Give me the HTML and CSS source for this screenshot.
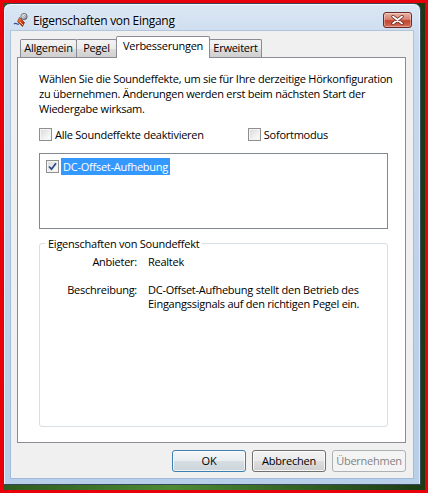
FILE: index.html
```html
<!DOCTYPE html>
<html lang="de">
<head>
<meta charset="utf-8">
<title>Eigenschaften von Eingang</title>
<link rel="stylesheet" href="styles.css">
</head>
<body>
<div class="screen">
  <div class="window">
    <div class="titlebar">
      <svg class="appicon" width="16" height="16" viewBox="0 0 16 16">
        <defs>
          <linearGradient id="mbody" x1="0" y1="0" x2="1" y2="1">
            <stop offset="0" stop-color="#ffb347"/>
            <stop offset="0.5" stop-color="#e0401c"/>
            <stop offset="1" stop-color="#8a1408"/>
          </linearGradient>
          <radialGradient id="mhead" cx="0.4" cy="0.35" r="0.7">
            <stop offset="0" stop-color="#ffffff"/>
            <stop offset="0.6" stop-color="#b9bec6"/>
            <stop offset="1" stop-color="#5a606a"/>
          </radialGradient>
        </defs>
        <path d="M1 12 C3 10 4 13 6 12" fill="none" stroke="#2a4f9a" stroke-width="1.2"/>
        <path d="M6.5 5.5 L11.5 10.5 L9.5 14.5 L4.5 9.5 Z" fill="url(#mbody)" stroke="#7a1a0a" stroke-width="0.6"/>
        <path d="M7 10 L10 13" stroke="#ffd36b" stroke-width="1"/>
        <circle cx="11" cy="4.5" r="3.2" fill="url(#mhead)" stroke="#4a4f58" stroke-width="0.6"/>
        <path d="M9 3.5 L12.5 6.5 M10 2.3 L13.2 5" stroke="#6d737c" stroke-width="0.5"/>
      </svg>
      <span class="title">Eigenschaften von Eingang</span>
      <div class="close">
        <svg width="13" height="10" viewBox="0 0 13 10">
          <path d="M2 1.5 L11 8.5 M11 1.5 L2 8.5" stroke="#5a1e18" stroke-width="3.2" stroke-linecap="round"/>
          <path d="M2 1.5 L11 8.5 M11 1.5 L2 8.5" stroke="#ffffff" stroke-width="1.8" stroke-linecap="round"/>
        </svg>
      </div>
    </div>
    <div class="client">
      <div class="tabs">
        <div class="tab t-allg">Allgemein</div>
        <div class="tab t-pegel">Pegel</div>
        <div class="tab t-verb active">Verbesserungen</div>
        <div class="tab t-erw">Erweitert</div>
      </div>
      <div class="panel">
        <p class="intro">Wählen Sie die Soundeffekte, um sie für Ihre derzeitige Hörkonfiguration<br>zu übernehmen. Änderungen werden erst beim nächsten Start der<br>Wiedergabe wirksam.</p>
        <div class="opts">
          <div class="chk c-all"><span class="box"></span><span>Alle Soundeffekte deaktivieren</span></div>
          <div class="chk c-sofort"><span class="box"></span><span>Sofortmodus</span></div>
        </div>
        <div class="listbox">
          <div class="item">
            <span class="box checked">
              <svg width="9" height="9" viewBox="0 0 9 9"><path d="M1 4.5 L3.5 7.2 L8 1.2" fill="none" stroke="#2c4a8c" stroke-width="1.8"/></svg>
            </span>
            <span class="sel">DC-Offset-Aufhebung</span>
          </div>
        </div>
        <div class="group">
          <div class="legend">Eigenschaften von Soundeffekt</div>
          <div class="row r-anb"><span class="k">Anbieter:</span><span class="v">Realtek</span></div>
          <div class="row r-desc"><span class="k">Beschreibung:</span><span class="v">DC-Offset-Aufhebung stellt den Betrieb des<br>Eingangssignals auf den richtigen Pegel ein.</span></div>
        </div>
      </div>
      <div class="buttons">
        <div class="btn default">OK</div>
        <div class="btn">Abbrechen</div>
        <div class="btn disabled">Übernehmen</div>
      </div>
    </div>
  </div>
</div>
</body>
</html>
```
FILE: styles.css
```css
* { box-sizing: border-box; }
html, body { margin: 0; padding: 0; }
body { background: #fff; }

.screen {
  width: 428px;
  height: 493px;
  border: 3px solid #e8000b;
  background: linear-gradient(90deg, #2d5a1e 0%, #4c8a33 40%, #1b3a14 100%);
  padding: 0 4px 5px 0;
  display: flex;
  font-family: "Open Sans", "Noto Sans", sans-serif;
  font-size: 11px;
  letter-spacing: -0.25px;
  color: #000;
}

.window {
  width: 418px;
  height: 482px;
  border: 1px solid #3a4656;
  border-radius: 7px 7px 0 0;
  background: linear-gradient(180deg, #dbe7f4 0%, #c9dbee 8%, #bcd2eb 60%, #b7cfe9 100%);
  padding: 0 7px 6px 7px;
  display: flex;
  flex-direction: column;
  box-shadow: inset 1px 1px 0 rgba(255,255,255,0.7), inset -1px 0 0 rgba(255,255,255,0.5);
}

.titlebar {
  height: 27px;
  padding-top: 5px;
  display: flex;
  align-items: center;
}
.appicon { margin-left: 2px; flex: none; }
.title {
  margin-left: 4px;
  font-size: 12px;
  letter-spacing: -0.3px;
  color: #000;
  text-shadow: 0 0 6px rgba(255,255,255,0.9);
}
.close {
  margin-left: auto;
  margin-right: 1px;
  width: 29px;
  height: 16px;
  border: 1px solid #6b2a25;
  border-radius: 3px;
  background: linear-gradient(180deg, #eab0a3 0%, #d98474 45%, #c4432e 55%, #d2705a 100%);
  display: flex;
  align-items: center;
  justify-content: center;
  box-shadow: inset 0 0 0 1px rgba(255,255,255,0.35);
}

.client {
  flex: 1;
  background: #f0f0f0;
  padding: 6px 7px 6px 6px;
  display: flex;
  flex-direction: column;
  box-shadow: 0 0 0 1px rgba(120,150,185,0.35);
}

.tabs {
  display: flex;
  align-items: flex-end;
  height: 21px;
  margin-bottom: -1px;
  margin-left: 3px;
  position: relative;
  z-index: 1;
}
.tab {
  height: 18px;
  border: 1px solid #898c95;
  border-bottom: none;
  border-radius: 2px 2px 0 0;
  background: linear-gradient(180deg, #f3f3f3 0%, #ebebeb 50%, #dddddd 51%, #cfcfcf 100%);
  text-align: center;
  line-height: 16px;
  margin-left: -1px;
  margin-bottom: 1px;
  color: #000;
}
.tab:first-child { margin-left: 0; }
.t-allg { width: 57px; }
.t-pegel { width: 41px; }
.t-verb { width: 94px; }
.t-erw { width: 53px; }
.tab.active {
  height: 22px;
  margin-bottom: 0;
  background: #fff;
  line-height: 17px;
  position: relative;
  z-index: 2;
}

.panel {
  height: 386px;
  border: 1px solid #898c95;
  background: #fff;
  padding: 13px 17px 0 21px;
}

.intro {
  margin: 0;
  line-height: 15px;
  white-space: nowrap;
}

.opts {
  display: flex;
  align-items: center;
  margin-top: 11px;
  height: 15px;
}
.chk { display: flex; align-items: center; }
.c-sofort { margin-left: 44px; }
.box {
  width: 13px;
  height: 13px;
  flex: none;
  border: 1px solid #8f8f8f;
  background: linear-gradient(135deg, #d9d9d9 0%, #f4f4f4 70%, #ffffff 100%);
  box-shadow: inset 0 0 0 1px #f4f4f4;
  margin-right: 3px;
  display: flex;
  align-items: center;
  justify-content: center;
}

.listbox {
  margin-top: 11px;
  height: 76px;
  border: 1px solid #828790;
  background: #fff;
  padding: 4px 6px;
}
.item { display: flex; align-items: center; height: 17px; }
.item .box { margin-right: 2px; }
.sel {
  background: #3399ff;
  color: #fff;
  padding: 0 2px;
  line-height: 17px;
}

.group {
  margin-top: 14px;
  height: 184px;
  border: 1px solid #d5dfe5;
  border-radius: 3px;
  position: relative;
  padding-top: 11px;
}
.legend {
  position: absolute;
  top: -8px;
  left: 5px;
  background: #fff;
  padding: 0 3px;
  line-height: 15px;
  color: #000;
}
.row { display: flex; line-height: 14px; }
.k { width: 97px; text-align: right; flex: none; }
.v { margin-left: 11px; }
.r-desc { margin-top: 14px; }

.buttons {
  margin-top: 7px;
  display: flex;
  justify-content: flex-end;
  gap: 6px;
}
.btn {
  width: 74px;
  height: 22px;
  border: 1px solid #707070;
  border-radius: 3px;
  background: linear-gradient(180deg, #f2f2f2 0%, #ebebeb 50%, #dddddd 51%, #cfcfcf 100%);
  box-shadow: inset 0 0 0 1px rgba(255,255,255,0.8);
  text-align: center;
  line-height: 20px;
}
.btn.default {
  border-color: #3c7fb1;
  box-shadow: inset 0 0 0 1px rgba(255,255,255,0.7);
  background: linear-gradient(180deg, #f4f6f8 0%, #e9edf0 50%, #d7dee3 51%, #cbd4da 100%);
}
.btn.disabled {
  border-color: #adb2b5;
  background: #f4f4f4;
  color: #838383;
  box-shadow: none;
}
```
